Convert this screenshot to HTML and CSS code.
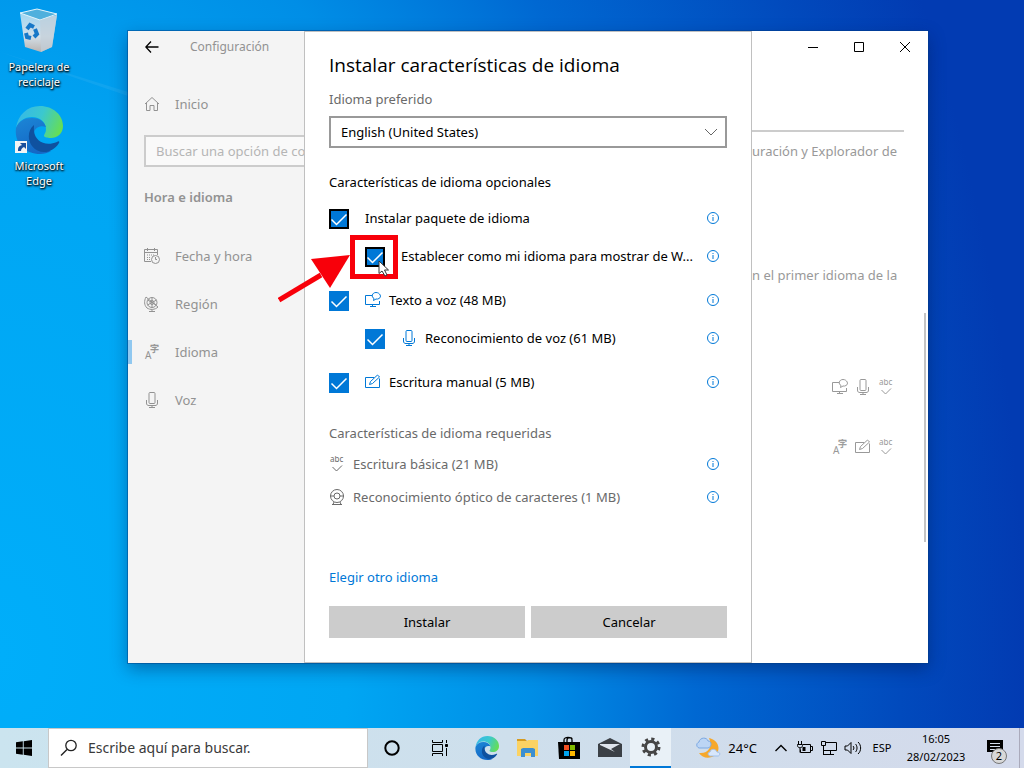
FILE: index.html
```html
<!DOCTYPE html>
<html lang="es">
<head>
<meta charset="utf-8">
<meta name="viewport" content="width=device-width, initial-scale=1">
<title>Configuración</title>
<link rel="stylesheet" href="styles.css">
</head>
<body>
<svg class="defs" aria-hidden="true">
  <defs>
    <linearGradient id="edge-top" x1="0" y1="0.3" x2="1" y2="0.6"><stop offset="0" stop-color="#35b8e8"/><stop offset="0.5" stop-color="#3bc8cf"/><stop offset="1" stop-color="#67de52"/></linearGradient>
    <linearGradient id="edge-left" x1="0" y1="0" x2="0.4" y2="1"><stop offset="0" stop-color="#1c86d6"/><stop offset="1" stop-color="#1468c6"/></linearGradient>
    <linearGradient id="bin" x1="0" y1="0" x2="0" y2="1"><stop offset="0" stop-color="#9fd6f2"/><stop offset="0.6" stop-color="#d3dfe8"/><stop offset="1" stop-color="#b9b4b2"/></linearGradient>
    <symbol id="i-edge" viewBox="0 0 48 48">
      <path d="M1 22C3 9 12 0 25 0c13 0 23 9 23 20 0 8-6 12-12 12-4 0-7-1-7-2 0-2 2-3 2-7 0-7-6-12-14-12C9 11 4 15 1 22z" fill="url(#edge-top)"/>
      <path d="M1 22C4 15 9 12 17 12c7 0 12 3 14 9-8-3-14 3-12 11 2 9 9 13 17 13-3 2-7 3-11 3C10 48-1 37 1 22z" fill="url(#edge-left)"/>
      <path d="M19 19c-6 5-7 14-2 21 7 9 20 8 27-3 1-2-1-2-2-1-12 5-22-1-23-11-.3-3 0-4 0-6z" fill="#0f519f"/>
    </symbol>
    <symbol id="i-tts" viewBox="0 0 16 16"><path d="M7 3.500H.5v9h14V9M5 14.500h6M7.500 12.500v2" /><path d="M8.500 8.500l.5-2C6 5 7 .5 11 .5s6 4.500 3 6c-1 .6-2 .7-3 .5z"/></symbol>
    <symbol id="i-mic" viewBox="0 0 16 16"><rect x="5" y=".5" width="6" height="11" rx="1"/><path d="M2.500 8v3c0 2 1 2.500 2.500 2.500h6c1.500 0 2.500-.5 2.500-2.500V8M8 13.500v2M5 15.500h6"/></symbol>
    <symbol id="i-pen" viewBox="0 0 16 16"><path d="M9 3.500H.5v10h14v-9"/><path d="M4.500 10.500l1-3 7-6.500 2 2L7.500 9.500z"/></symbol>
    <symbol id="i-abc" viewBox="0 0 16 16"><text x="1" y="6" font-size="8" fill="currentColor" stroke="none">abc</text><path d="M3.500 11l4 4 5.500-5.500"/></symbol>
    <symbol id="i-lang" viewBox="0 0 16 16"><text x="1" y="15" font-size="10" fill="currentColor" stroke="none">A</text><text x="6" y="8" font-size="9" fill="currentColor" stroke="currentColor" stroke-width=".3">字</text></symbol>
    <symbol id="i-cam" viewBox="0 0 16 16"><circle cx="8" cy="7" r="6.500"/><circle cx="8" cy="7" r="3"/><path d="M1.500 7H5M11 7h3.500M5 13l-1 2.500M11 13l1 2.500M3 15.500h10"/></symbol>
    <symbol id="i-home" viewBox="0 0 16 16"><path d="M1 8l7-6.500L15 8M2.500 7v7.500H6v-5h4v5h3.500V7"/></symbol>
    <symbol id="i-date" viewBox="0 0 16 16"><path d="M7 13.500H.5v-12h13V7M.5 4.500h13M3.500 0v3M10.500 0v3"/><path d="M3 7h8M3 9.500h4M3 11.500h3" stroke-dasharray="1 1"/><circle cx="11.500" cy="11.500" r="4"/><path d="M11.500 9v2.500H13"/></symbol>
    <symbol id="i-region" viewBox="0 0 16 16"><circle cx="8" cy="6.500" r="5"/><circle cx="8" cy="6.500" r="2"/><path d="M3.500 4l9 5M12.500 4l-9 5M8 1.500v10M2 1C0 5 0 9 3 12c3 2 8 2 11-1M8 13.500v2M5 15.500h6M2 1l12 10"/></symbol>
    <symbol id="i-info" viewBox="0 0 12 12"><circle cx="6" cy="6" r="5.500"/><path d="M6 5v4M6 3v1"/></symbol>
  </defs>
</svg>

<main class="desktop">
  <svg class="light" viewBox="0 0 128 100" aria-hidden="true"><path d="M0 22L128 62V66z" fill="#fff" opacity=".06"/></svg>
  <nav class="shortcuts" aria-label="Escritorio">
    <a class="shortcut" href="#papelera">
      <svg class="shortcut-icon" viewBox="0 0 48 48" aria-hidden="true">
        <path d="M5 6l5 34 16 5 11-5 5-32-18 4z" fill="url(#bin)"/><path d="M5 6L22 2l20 5-17 6z" fill="#4fb0dd" stroke="#e4f5fc"/><path d="M25 13l1 32 11-5 5-32z" fill="#c3cfd8" opacity=".7"/>
        <g fill="none" stroke="#1678c8" stroke-width="4"><path d="M12 22l3-4 4 2M20 22l2 5-3 3M16 31l-4-1-1-4"/></g>
      </svg>
      <span>Papelera de reciclaje</span>
    </a>
    <a class="shortcut" href="#edge">
      <svg class="shortcut-icon" viewBox="0 0 48 48" aria-hidden="true"><use href="#i-edge"/><path d="M0 35h12v12H0z" fill="#f4f4f4"/><path d="M3 45c0-4 1-5 4-6l-2-2h6v6l-2-2c-2 1-3 2-3 4z" fill="#1b4f9c"/></svg>
      <span>Microsoft Edge</span>
    </a>
  </nav>

  <section class="window" aria-label="Configuración">
    <aside class="sidebar">
      <header class="sidebar-head">
        <button class="back" aria-label="Atrás"><svg viewBox="0 0 14 12" width="14" height="12"><path d="M6 .5L.8 6 6 11.500M1 6h12.500" fill="none" stroke="#000" stroke-width="1.300"/></svg></button>
        <span>Configuración</span>
      </header>
      <a class="side-link home" href="#inicio"><svg class="icon"><use href="#i-home"/></svg>Inicio</a>
      <input class="side-search" type="search" aria-label="Buscar" placeholder="Buscar una opción de configuración">
      <h2>Hora e idioma</h2>
      <nav class="side-nav">
        <a class="side-link" href="#fecha"><svg class="icon"><use href="#i-date"/></svg>Fecha y hora</a>
        <a class="side-link" href="#region"><svg class="icon"><use href="#i-region"/></svg>Región</a>
        <a class="side-link current" href="#idioma"><svg class="icon"><use href="#i-lang"/></svg>Idioma</a>
        <a class="side-link" href="#voz"><svg class="icon"><use href="#i-mic"/></svg>Voz</a>
      </nav>
    </aside>

    <form class="dialog" role="dialog" aria-labelledby="dialog-title">
      <h1 id="dialog-title">Instalar características de idioma</h1>
      <label class="muted" for="lang">Idioma preferido</label>
      <select id="lang"><option>English (United States)</option></select>
      <h2>Características de idioma opcionales</h2>
      <div class="options">
        <div class="group">
          <div class="option"><input class="outlined" type="checkbox" id="pack" checked><label for="pack">Instalar paquete de idioma</label><button type="button" class="info" aria-label="Información"><svg><use href="#i-info"/></svg></button></div>
          <div class="option nested"><span class="target"><input class="outlined" type="checkbox" id="display" checked>
            <svg class="callout" viewBox="0 0 120 76" aria-hidden="true">
              <path d="M74.500 5.500h43v39h-43z" fill="none" stroke="#f8000a" stroke-width="5"/>
              <path d="M1 68L43 43" stroke="#f8000a" stroke-width="5"/><path d="M33 27l39-4-20 33z" fill="#f8000a"/>
              <path d="M101 29v12.500l3-2.500 3 5 2-1-2.500-5h4z" fill="#fff" stroke="#333"/>
            </svg></span><label for="display">Establecer como mi idioma para mostrar de W...</label><button type="button" class="info" aria-label="Información"><svg><use href="#i-info"/></svg></button></div>
        </div>
        <div class="group">
          <div class="option"><input type="checkbox" id="tts" checked><label for="tts"><svg class="icon"><use href="#i-tts"/></svg>Texto a voz (48 MB)</label><button type="button" class="info" aria-label="Información"><svg><use href="#i-info"/></svg></button></div>
          <div class="option nested"><input type="checkbox" id="speech" checked><label for="speech"><svg class="icon"><use href="#i-mic"/></svg>Reconocimiento de voz (61 MB)</label><button type="button" class="info" aria-label="Información"><svg><use href="#i-info"/></svg></button></div>
        </div>
        <div class="group">
          <div class="option"><input type="checkbox" id="hand" checked><label for="hand"><svg class="icon"><use href="#i-pen"/></svg>Escritura manual (5 MB)</label><button type="button" class="info" aria-label="Información"><svg><use href="#i-info"/></svg></button></div>
        </div>
      </div>
      <h2 class="muted required">Características de idioma requeridas</h2>
      <ul>
        <li class="muted"><svg class="icon"><use href="#i-abc"/></svg><span>Escritura básica (21 MB)</span><button type="button" class="info" aria-label="Información"><svg><use href="#i-info"/></svg></button></li>
        <li class="muted"><svg class="icon"><use href="#i-cam"/></svg><span>Reconocimiento óptico de caracteres (1 MB)</span><button type="button" class="info" aria-label="Información"><svg><use href="#i-info"/></svg></button></li>
      </ul>
      <a class="other" href="#otro">Elegir otro idioma</a>
      <div class="actions"><button type="button">Instalar</button><button type="button">Cancelar</button></div>
    </form>

    <div class="content">
      <div class="controls">
        <button aria-label="Minimizar"><svg viewBox="0 0 12 12"><path d="M1 6.500h10"/></svg></button>
        <button aria-label="Maximizar"><svg viewBox="0 0 12 12"><path d="M1.500 1.500h9v9h-9z"/></svg></button>
        <button aria-label="Cerrar"><svg viewBox="0 0 12 12"><path d="M1 1l10 10M11 1L1 11"/></svg></button>
      </div>
      <div class="page">
        <hr>
        <p>uración y Explorador de</p>
        <p class="second">n el primer idioma de la</p>
        <div class="features"><svg class="icon"><use href="#i-tts"/></svg><svg class="icon"><use href="#i-mic"/></svg><svg class="icon"><use href="#i-abc"/></svg></div>
        <div class="features"><svg class="icon"><use href="#i-lang"/></svg><svg class="icon"><use href="#i-pen"/></svg><svg class="icon"><use href="#i-abc"/></svg></div>
      </div>
      <div class="scrollbar"></div>
    </div>
  </section>
</main>

<footer class="taskbar">
  <button class="task wide" aria-label="Inicio"><svg width="16" height="16" viewBox="0 0 16 16"><path d="M0 2.200L6.800 1.300V7.500H0zM7.700 1.200L16 0v7.500H7.700zM0 8.400h6.800v6.300L0 13.800zM7.700 8.400H16V16l-8.300-1.200z"/></svg></button>
  <label class="search"><svg width="18" height="18" viewBox="0 0 18 18"><circle cx="11" cy="6.500" r="5.200" fill="none" stroke="#222" stroke-width="1.300"/><path d="M7 10.500L1 16.500" stroke="#222" stroke-width="1.400"/></svg><input type="search" aria-label="Buscar" placeholder="Escribe aquí para buscar."></label>
  <button class="task wide" aria-label="Cortana"><svg width="18" height="18" viewBox="0 0 18 18"><circle cx="9" cy="9" r="6.700" fill="none" stroke="#000" stroke-width="2"/></svg></button>
  <button class="task wide" aria-label="Vista de tareas"><svg width="18" height="16" viewBox="0 0 18 16" fill="none" stroke="#000"><path d="M1.500 0v2.500h10V0M1.500 16v-2.500h10V16M1.500 4.500h10v7h-10zM15.500 0v3M15.500 8v8"/><path d="M14.500 4.500h2v2h-2z" fill="#000"/></svg></button>
  <div class="apps">
    <button class="task" aria-label="Edge"><svg width="24" height="24"><use href="#i-edge"/></svg></button>
    <button class="task" aria-label="Explorador"><svg width="22" height="20" viewBox="0 0 22 20"><path d="M0 1h8l2 2H0z" fill="#d69b20"/><path d="M0 3h10l1-1h10v16H0z" fill="#fbd263"/><path d="M4 19v-8l2-1h10l2 1v8h-4v-4H8v4z" fill="#3c8fd0"/></svg></button>
    <button class="task" aria-label="Store"><svg width="24" height="24" viewBox="0 0 24 24"><path d="M7 7V4c0-3.500 8-3.500 8 0v3M10 6V4c0-3 5-3 5-1" fill="none" stroke="#000" stroke-width="1.300"/><path d="M1 6h22v17H2z"/><path d="M7 9h5v5H7z" fill="#f25022"/><path d="M13 9h5v5h-5z" fill="#7fba00"/><path d="M7 15h5v5H7z" fill="#00a4ef"/><path d="M13 15h5v5h-5z" fill="#ffb900"/></svg></button>
    <button class="task" aria-label="Correo"><svg width="24" height="20" viewBox="0 0 24 20"><path d="M0 6L12 0l12 6v13H0z" fill="#3b4046"/><path d="M2 6h20l-9 5 4 3L2 7z" fill="#dfe5ed"/></svg></button>
    <button class="task active" aria-label="Configuración"><svg width="20" height="20" viewBox="0 0 20 20" fill="none" stroke="#454545"><circle cx="10" cy="10" r="8" stroke-width="3" stroke-dasharray="3.140 3.140"/><circle cx="10" cy="10" r="5.500" stroke-width="3"/></svg></button>
  </div>
  <div class="tray">
    <button class="weather"><svg width="26" height="24" viewBox="0 0 26 24"><path d="M13 2c10 2 13 13 5 18-5 3-12 2-15-3 9 1 14-6 10-15z" fill="#f6a82b"/><path d="M3 12c-3-1-3-5 0-6 1-5 8-5 9-1 4 0 4 6 0 7z" fill="#bcd5f5" stroke="#7da9e2"/><path d="M14 20c-3-1-2-4 0-4 1-4 6-3 7 0 4 0 3 4 1 4z" fill="#d8e7fb" stroke="#a0c0ea"/></svg>24°C</button>
    <button class="tray-icon" aria-label="Iconos ocultos"><svg width="14" height="16" viewBox="0 0 14 16"><path d="M1.500 11L7 5.500l5.500 5.500" stroke-width="1.400"/></svg></button>
    <button class="tray-icon" aria-label="Batería"><svg width="18" height="16" viewBox="0 0 18 16"><path d="M7 4.500h7.500v8h-10v-3M14.500 6.500h2v4h-2M2.500 1v3M5.500 1v3M1.500 4.500h5v1c0 3-5 3-5 0zM4 8v4.500"/><path d="M6.500 7h3v4h-3z" fill="#000" stroke="none"/></svg></button>
    <button class="tray-icon" aria-label="Red"><svg width="18" height="16" viewBox="0 0 18 16"><path d="M6 2.500h10.500v8H3.500V7M1.500 1.500h4v4h-4zM3.500 5.500v9M10.500 10.500v4M3 14.500h11"/></svg></button>
    <button class="tray-icon" aria-label="Volumen"><svg width="18" height="16" viewBox="0 0 18 16"><path d="M1 6h2.500L7 2.500v11L3.500 10H1zM9 6c1.200 1 1.200 3 0 4M11.500 4c2 2 2 6 0 8M14 2c3.500 3 3.500 9 0 12"/></svg></button>
    <button class="lang">ESP</button>
    <button class="clock">16:05<br>28/02/2023</button>
    <button class="notes" aria-label="Notificaciones"><svg width="18" height="18" viewBox="0 0 18 18"><path d="M0 1h16v12h-4v4l-4-4H0z"/><path d="M3 4.500h10M3 7.500h10M3 10.500h6" stroke="#d3dcea"/></svg><span class="badge">2</span></button>
    <button class="peek" aria-label="Mostrar escritorio"></button>
  </div>
</footer>
</body>
</html>
```
FILE: styles.css
```css
* { box-sizing: border-box; }

body {
  margin: 0;
  min-height: 100vh;
  display: flex;
  flex-direction: column;
  font: 13px/20px "Noto Sans", "Open Sans", "Noto Sans CJK SC", sans-serif;
  color: #000;
  background: radial-gradient(ellipse 100% 195% at 0% 85%, #00aefa 0%, #00a6f3 34%, #008ee6 52%, #0068d2 68%, #014abd 88%, #023bb2 100%);
}

a { color: inherit; text-decoration: none; }
button { font: inherit; color: inherit; border: 0; padding: 0; background: none; }
h1, h2, p, ul { margin: 0; padding: 0; font-size: inherit; font-weight: 400; }
.defs { position: absolute; width: 0; height: 0; }
.icon { width: 16px; height: 16px; flex: none; fill: none; stroke: currentColor; }

.desktop { flex: 1; display: flex; position: relative; padding: 31px 96px 65px 0; }
.light { position: absolute; left: 0; top: 30px; width: 128px; height: 100px; }

.shortcuts { flex: 0 0 128px; margin-top: -24px; position: relative; display: flex; flex-direction: column; gap: 17px; }
.shortcut { width: 78px; display: flex; flex-direction: column; align-items: center; text-align: center; font-size: 11px; line-height: 15px; color: #fff; text-shadow: 1px 1px 2px #000, 0 1px 2px #000; }
.shortcut-icon { width: 48px; height: 48px; margin-bottom: 4px; }
.shortcut span { width: 66px; }

.window { flex: 1; display: flex; position: relative; background: #fff; box-shadow: 0 0 0 1px rgba(0, 60, 130, .45), 0 6px 16px rgba(0, 20, 70, .4); }

.sidebar { flex: 0 0 176px; overflow: hidden; background: #f4f4f4; color: #929292; }
.sidebar-head { height: 32px; display: flex; align-items: center; gap: 31px; padding-left: 17px; font-size: 12px; }
.back { display: flex; width: 14px; }
.side-link { display: flex; align-items: center; gap: 15px; height: 48px; padding-left: 16px; font-size: 13px; }
.home { margin-top: 17px; }
.side-search { display: block; width: 288px; height: 32px; margin: 7px 0 0 16px; padding: 0 10px; border: 2px solid #ccc; background: #f9f9f9; font: inherit; }
.side-search::placeholder { color: #b5b5b5; opacity: 1; }
.sidebar h2 { margin: 20px 0 25px 16px; font-weight: 600; }
.current { background: linear-gradient(#90c8f0, #90c8f0) 0 center / 4px 24px no-repeat; }

.dialog { flex: 0 1 448px; min-width: 0; display: flex; flex-direction: column; padding: 17px 24px 24px; background: #fff; border: 1px solid #c0c0c0; }
.dialog h1 { font-family: "Open Sans", "Noto Sans", sans-serif; font-size: 19px; line-height: 32px; }
.muted { color: #6a6a6a; }
.dialog > label { margin: 8px 0 7px; }
.dialog select { height: 32px; padding: 0 10px; border: 2px solid #999; border-radius: 0; appearance: none; font: inherit; color: #000; background: #fff url("data:image/svg+xml,%3Csvg xmlns='http://www.w3.org/2000/svg' width='14' height='8' fill='none' stroke='%23666'%3E%3Cpath d='M1 1l6 6 6-6'/%3E%3C/svg%3E") right 7px center no-repeat; }
.dialog h2 { margin-top: 24px; }
.options { display: flex; flex-direction: column; gap: 12px; margin-top: 10px; }
.group { display: flex; flex-direction: column; gap: 6px; }
.option { display: flex; align-items: center; height: 32px; gap: 8px; padding-right: 8px; }
.nested { padding-left: 36px; }
.option label { flex: 1; min-width: 0; margin-left: 8px; white-space: nowrap; }
.option label .icon { color: #0078d7; vertical-align: -3px; margin-right: 8px; }
.option input { appearance: none; display: block; flex: none; width: 20px; height: 20px; margin: 2px 0 0; background: #0078d7 url("data:image/svg+xml,%3Csvg xmlns='http://www.w3.org/2000/svg' width='20' height='20' fill='none' stroke='white' stroke-width='1.500'%3E%3Cpath d='M2.500 10.500l5 5L17.500 5.500'/%3E%3C/svg%3E") center no-repeat; }
.option .outlined { border: 2px solid #000; }
.info { flex: none; width: 12px; height: 12px; }
.info svg { display: block; width: 12px; height: 12px; fill: none; stroke: #0078d7; }
.target { position: relative; }
.callout { position: absolute; left: -87px; top: -13px; width: 120px; height: 76px; pointer-events: none; z-index: 2; }
.dialog .required { margin-top: 25px; }
.dialog ul { display: flex; flex-direction: column; gap: 9px; margin-top: 9px; list-style: none; }
.dialog li { display: flex; align-items: center; height: 24px; gap: 8px; padding-right: 8px; }
.dialog li span { flex: 1; }
.other { margin-top: auto; align-self: flex-start; color: #0078d7; }
.actions { display: grid; grid-template-columns: 1fr 1fr; gap: 6px; margin-top: 19px; }
.actions button { height: 32px; background: #ccc; }

.content { flex: 1; min-width: 0; position: relative; overflow: hidden; color: #999; }
.controls { display: flex; justify-content: flex-end; height: 32px; }
.controls button { width: 46px; display: grid; place-items: center; }
.controls svg { width: 12px; height: 12px; fill: none; stroke: #000; }
.page { padding: 67px 24px 0 0; }
.page hr { margin: 0 0 9px; border: 0; border-top: 2px solid #ccc; }
.page p { white-space: nowrap; }
.page .second { margin-top: 104px; }
.features { display: flex; justify-content: flex-end; gap: 7px; height: 16px; margin: 94px 10px 0 0; }
.features + .features { margin-top: 44px; }
.scrollbar { position: absolute; right: 2px; top: 282px; bottom: 121px; width: 2px; background: #c4c4c4; }

.taskbar { display: flex; height: 40px; background: linear-gradient(90deg, #cbe4ef, #cedfec 50%, #d4daeb); }
.task { width: 41px; display: grid; place-items: center; }
.wide { width: 48px; }
.search { flex: 0 1 320px; display: flex; align-items: center; gap: 10px; padding-left: 11px; background: #fff; border: 1px solid #c8c8c8; }
.search input { flex: 1; min-width: 0; border: 0; outline: 0; padding: 0; background: none; font: inherit; font-size: 14px; }
.search input::placeholder { color: #3a3a3a; opacity: 1; }
.apps { display: flex; padding-left: 2px; }
.active { background: #e9f1f7; border-bottom: 2px solid #0078d7; }
.tray { margin-left: auto; display: flex; align-items: center; }
.weather { display: flex; align-items: center; gap: 6px; margin-right: 12px; }
.tray-icon { width: 24px; height: 40px; display: grid; place-items: center; }
.tray-icon svg { fill: none; stroke: #000; }
.lang { width: 34px; font-size: 11px; }
.clock { width: 74px; font-size: 11px; line-height: 18px; text-align: center; }
.notes { position: relative; width: 46px; height: 40px; display: grid; place-items: center; }
.badge { position: absolute; right: 12px; bottom: 4px; width: 16px; height: 16px; border: 1px solid #777; border-radius: 8px; background: #d8d8d8; font-size: 11px; line-height: 14px; text-align: center; }
.peek { width: 5px; height: 40px; border-left: 1px solid #aab; }
```
